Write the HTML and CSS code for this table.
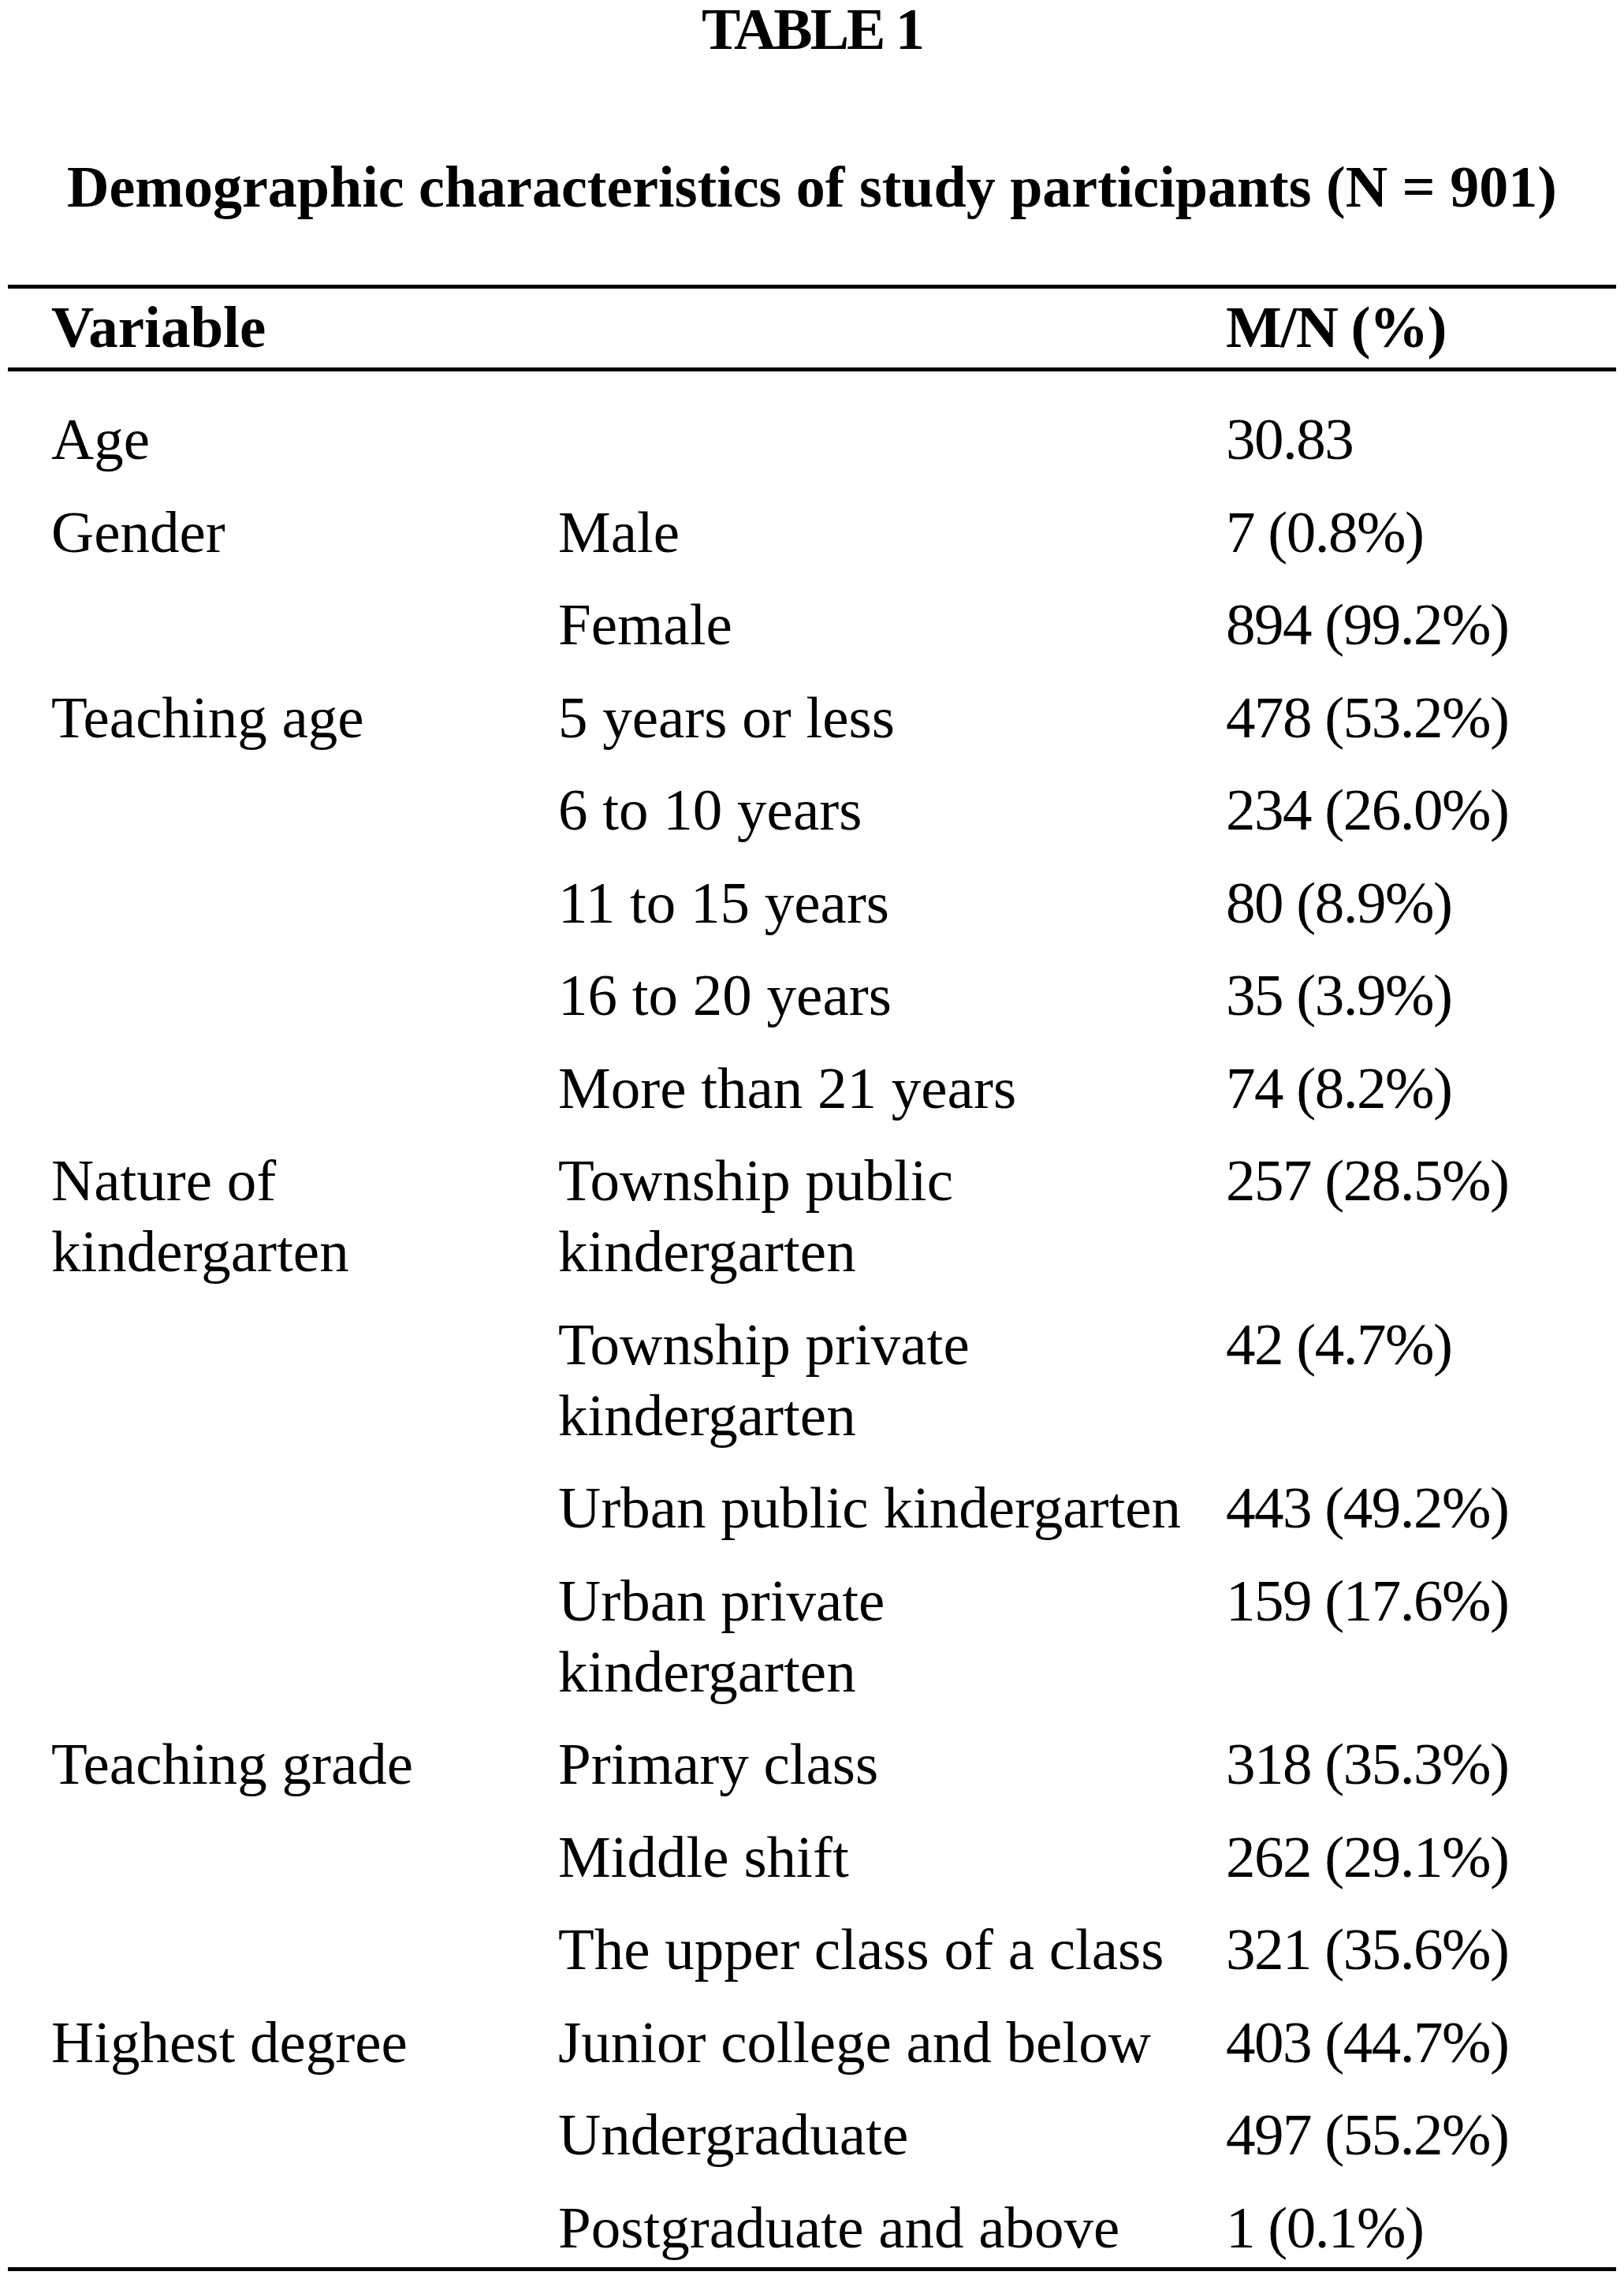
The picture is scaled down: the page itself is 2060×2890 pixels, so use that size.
FILE: index.html
```html
<!DOCTYPE html>
<html lang="en">
<head>
<meta charset="utf-8">
<title>Table 1</title>
<link rel="stylesheet" href="styles.css">
</head>
<body>
<div class="table-figure">
  <div class="table-label">TABLE 1</div>
  <div class="table-caption">Demographic characteristics of study participants (N = 901)</div>
  <table class="data-table">
    <colgroup>
      <col class="col-var">
      <col class="col-cat">
      <col class="col-val">
    </colgroup>
    <thead>
      <tr>
        <th>Variable</th>
        <th></th>
        <th>M/N (%)</th>
      </tr>
    </thead>
    <tbody>
      <tr><td>Age</td><td></td><td>30.83</td></tr>
      <tr><td>Gender</td><td>Male</td><td>7 (0.8%)</td></tr>
      <tr><td></td><td>Female</td><td>894 (99.2%)</td></tr>
      <tr><td>Teaching age</td><td>5 years or less</td><td>478 (53.2%)</td></tr>
      <tr><td></td><td>6 to 10 years</td><td>234 (26.0%)</td></tr>
      <tr><td></td><td>11 to 15 years</td><td>80 (8.9%)</td></tr>
      <tr><td></td><td>16 to 20 years</td><td>35 (3.9%)</td></tr>
      <tr><td></td><td>More than 21 years</td><td>74 (8.2%)</td></tr>
      <tr><td>Nature of kindergarten</td><td>Township public kindergarten</td><td>257 (28.5%)</td></tr>
      <tr><td></td><td>Township private kindergarten</td><td>42 (4.7%)</td></tr>
      <tr><td></td><td>Urban public kindergarten</td><td>443 (49.2%)</td></tr>
      <tr><td></td><td>Urban private kindergarten</td><td>159 (17.6%)</td></tr>
      <tr><td>Teaching grade</td><td>Primary class</td><td>318 (35.3%)</td></tr>
      <tr><td></td><td>Middle shift</td><td>262 (29.1%)</td></tr>
      <tr><td></td><td>The upper class of a class</td><td>321 (35.6%)</td></tr>
      <tr><td>Highest degree</td><td>Junior college and below</td><td>403 (44.7%)</td></tr>
      <tr><td></td><td>Undergraduate</td><td>497 (55.2%)</td></tr>
      <tr><td></td><td>Postgraduate and above</td><td>1 (0.1%)</td></tr>
    </tbody>
  </table>
</div>
</body>
</html>
```

FILE: styles.css
```css
html, body {
  margin: 0;
  padding: 0;
  background: #ffffff;
  color: #000000;
}

body {
  font-family: "Liberation Serif", "Times New Roman", serif;
}

.table-figure {
  width: 2040px;
  margin: 0 0 0 10px;
}

.table-label {
  font-size: 74px;
  font-weight: bold;
  line-height: 74px;
  text-align: center;
  letter-spacing: -3px;
}

.table-caption {
  margin-top: 126px;
  font-size: 74px;
  font-weight: bold;
  line-height: 74px;
  text-align: center;
}

.data-table {
  margin-top: 87px;
  width: 2040px;
  table-layout: fixed;
  border-collapse: collapse;
  border-spacing: 0;
  font-size: 75px;
  line-height: 90px;
  border-top: 5px solid #000;
  border-bottom: 5px solid #000;
}

.col-var { width: 688px; }
.col-cat { width: 847px; }
.col-val { width: 505px; }

.data-table th {
  font-weight: bold;
  text-align: left;
  padding: 4px 0 6px 10px;
  border-bottom: 5px solid #000;
}

.data-table th:first-child,
.data-table td:first-child {
  padding-left: 55px;
}

.data-table td {
  vertical-align: top;
  text-align: left;
  padding: 27.5px 37px 0 10px;
}

.data-table td:nth-child(3),
.data-table th:nth-child(3) {
  letter-spacing: -1.5px;
}

.data-table tbody tr:first-child td {
  padding-top: 41px;
}

.data-table tbody tr:last-child td {
  padding-bottom: 5px;
}
```
